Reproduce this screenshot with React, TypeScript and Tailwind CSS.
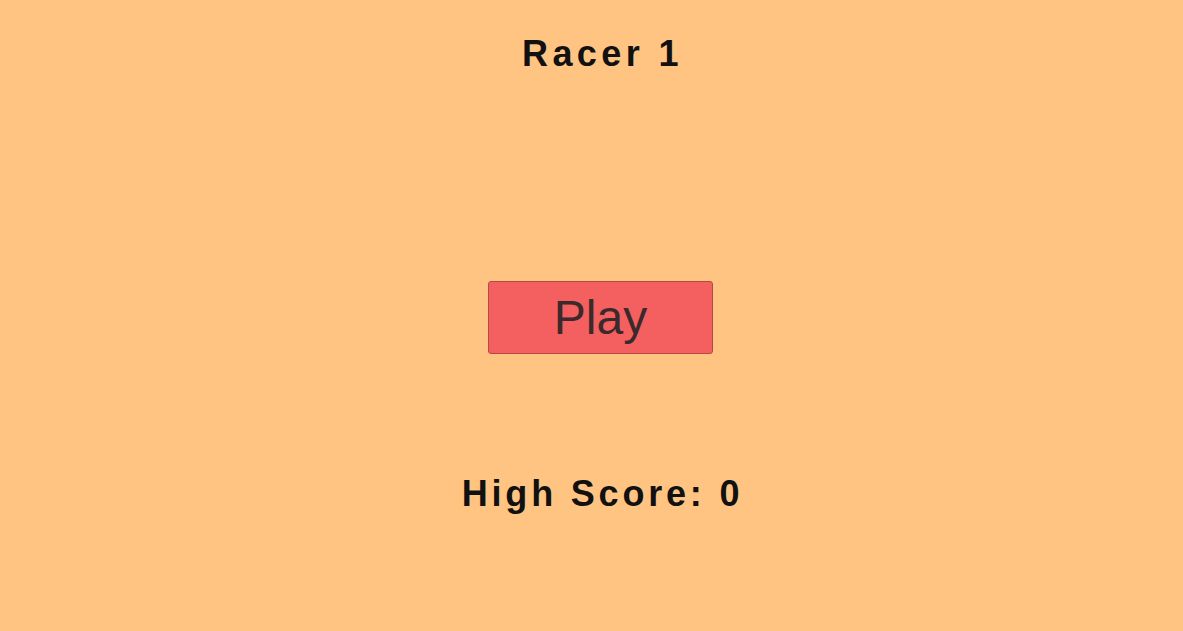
export default function App() {
  return (
    <div
      className="w-full h-[631px] bg-[#ffc482] flex flex-col items-center pt-[34px] pl-[18px]"
      style={{ fontFamily: '"Liberation Sans", Arial, sans-serif' }}
    >
      <h1 className="text-[36px] leading-10 font-bold tracking-[4.4px] text-[#111111] ml-[4px]">
        Racer 1
      </h1>
      <button className="mt-[207px] w-[225px] h-[73px] bg-[#f45f5f] border border-[#b84848] rounded-[3px] text-[48px] leading-none text-[#3a2a2c] flex items-center justify-center">
        Play
      </button>
      <div className="mt-[120px] text-[36px] leading-10 font-bold tracking-[3.8px] text-[#111111] ml-[4px]">
        High Score: 0
      </div>
    </div>
  );
}
